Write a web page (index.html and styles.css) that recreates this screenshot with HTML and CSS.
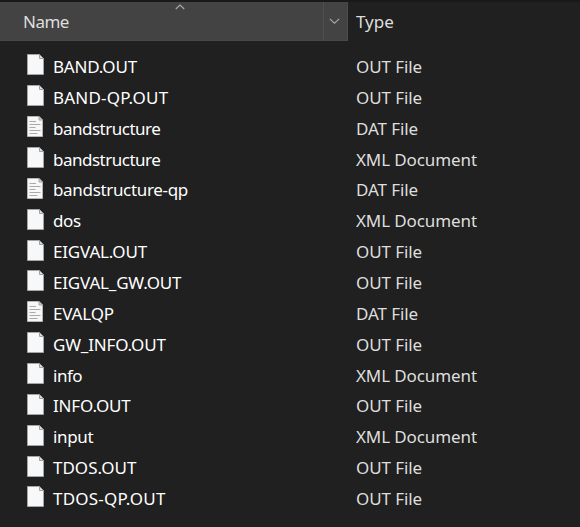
FILE: index.html
```html
<!DOCTYPE html>
<html lang="en">
<head>
<meta charset="utf-8">
<title>Files</title>
<link rel="stylesheet" href="styles.css">
</head>
<body>
<svg class="defs" aria-hidden="true">
  <symbol id="page" viewBox="0 0 17 21">
    <path d="M.5.5H12.5L16.5 4.5V20.5H.5Z" fill="#f7f8f9" stroke="#a5a5a5"/>
    <path d="M12.5.5V4.5H16.5Z" fill="#dedede" stroke="#a0a0a0"/>
  </symbol>
  <symbol id="text" viewBox="0 0 17 21">
    <path d="M.5.5H12L15.5 4V20.5H.5Z" fill="#f7f7f7" stroke="#b5b5b5"/>
    <path d="M12 .5V4H15.5Z" fill="#dedede" stroke="#a0a0a0"/>
    <path d="M2.5 5.5H9M2.5 8.5H13.5M2.5 11.5H8.5M2.5 14.5H13.5M2.5 17.5H10.5" stroke="#aaa" fill="none"/>
  </symbol>
</svg>
<main class="list">
  <header class="head">
    <div class="head-name"><span class="tight">Name</span>
      <svg class="sort" viewBox="0 0 10 6"><path d="M.8 5L5 1L9.2 5"/></svg>
      <div class="drop"><svg viewBox="0 0 11 6"><path d="M.8.8L5.5 5.2L10.2.8"/></svg></div>
    </div>
    <div class="head-type">Type</div>
  </header>
  <div class="rows">
    <div class="row"><svg class="icon"><use href="#page"/></svg><span class="name snug">BAND.OUT</span><span class="type">OUT File</span></div>
    <div class="row"><svg class="icon"><use href="#page"/></svg><span class="name loose">BAND-QP.OUT</span><span class="type">OUT File</span></div>
    <div class="row"><svg class="icon"><use href="#text"/></svg><span class="name tight">bandstructure</span><span class="type">DAT File</span></div>
    <div class="row"><svg class="icon"><use href="#page"/></svg><span class="name tight">bandstructure</span><span class="type xml">XML Document</span></div>
    <div class="row"><svg class="icon"><use href="#text"/></svg><span class="name close">bandstructure-qp</span><span class="type">DAT File</span></div>
    <div class="row"><svg class="icon"><use href="#page"/></svg><span class="name close">dos</span><span class="type xml">XML Document</span></div>
    <div class="row"><svg class="icon"><use href="#page"/></svg><span class="name snug">EIGVAL.OUT</span><span class="type">OUT File</span></div>
    <div class="row"><svg class="icon"><use href="#page"/></svg><span class="name snug">EIGVAL_GW.OUT</span><span class="type">OUT File</span></div>
    <div class="row"><svg class="icon"><use href="#text"/></svg><span class="name snug">EVALQP</span><span class="type">DAT File</span></div>
    <div class="row"><svg class="icon"><use href="#page"/></svg><span class="name snug">GW_INFO.OUT</span><span class="type">OUT File</span></div>
    <div class="row"><svg class="icon"><use href="#page"/></svg><span class="name tight">info</span><span class="type xml">XML Document</span></div>
    <div class="row"><svg class="icon"><use href="#page"/></svg><span class="name snug">INFO.OUT</span><span class="type">OUT File</span></div>
    <div class="row"><svg class="icon"><use href="#page"/></svg><span class="name close">input</span><span class="type xml">XML Document</span></div>
    <div class="row"><svg class="icon"><use href="#page"/></svg><span class="name">TDOS.OUT</span><span class="type">OUT File</span></div>
    <div class="row"><svg class="icon"><use href="#page"/></svg><span class="name loose">TDOS-QP.OUT</span><span class="type">OUT File</span></div>
  </div>
</main>
</body>
</html>
```
FILE: styles.css
```css
* { box-sizing: border-box; }
body {
  margin: 0;
  background: #202020;
  color: #fff;
  font: 17px/24px "Noto Sans", "Open Sans", sans-serif;
}
.defs { position: absolute; width: 0; height: 0; }
.list { height: 527px; overflow: hidden; border-top: 2px solid #191919; }
.head { display: flex; height: 39px; color: #dedede; }
.head-name {
  position: relative;
  display: flex;
  align-items: center;
  justify-content: space-between;
  width: 347.5px;
  padding: 2px 0 0 23px;
  background: #434343;
  border-right: 1px solid #4c4c4c;
  border-bottom: 1px solid #484848;
}
.head-type { padding: 8px 0 0 8.5px; }
.sort { position: absolute; left: 175px; top: 2px; width: 10px; height: 6px; }
.sort path, .drop path { fill: none; stroke: #aaa; stroke-width: 1.1; }
.drop {
  align-self: stretch;
  display: flex;
  align-items: center;
  width: 24px;
  margin-top: -2px;
  padding-left: 5px;
  border-left: 1px solid #505050;
}
.drop svg { width: 11px; height: 6px; }
.rows { padding-top: 10.5px; }
.row { display: flex; align-items: center; height: 30.87px; padding-left: 27px; white-space: pre; }
.icon { flex: none; width: 17px; height: 21px; margin: -4px 9px 0 0; }
.name { width: 303px; }
.type { color: #dedede; letter-spacing: -.1px; }
.snug { letter-spacing: -.18px; }
.close { letter-spacing: -.33px; }
.tight { letter-spacing: -.5px; }
.loose { letter-spacing: .22px; }
```
